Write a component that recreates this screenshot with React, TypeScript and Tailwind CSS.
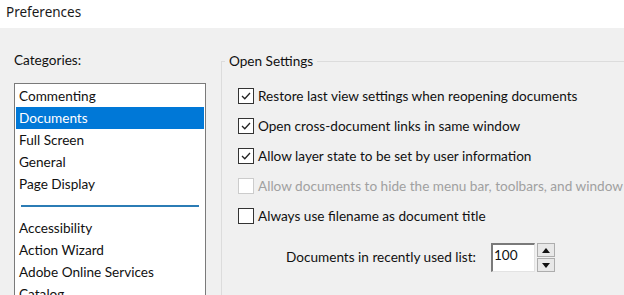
import React from "react";

const font = { fontFamily: "Lato, 'Noto Sans', sans-serif" };

function Check({ checked, disabled, label }: { checked?: boolean; disabled?: boolean; label: string }) {
  return (
    <div className="flex h-[30px] items-center">
      <div
        className={
          "flex h-[16px] w-[16px] shrink-0 items-center justify-center border bg-white " +
          (disabled ? "border-[#cccccc]" : "border-[#333333]")
        }
      >
        {checked && (
          <svg width="12" height="12" viewBox="0 0 12 12">
            <path d="M2 6 L4.8 8.8 L10 3" fill="none" stroke="#222" strokeWidth="1.3" />
          </svg>
        )}
      </div>
      <span className={"ml-[4px] whitespace-nowrap text-[13.6px] " + (disabled ? "text-[#a0a0a0]" : "text-[#111]")}>
        {label}
      </span>
    </div>
  );
}

export default function App() {
  const items1 = ["Commenting", "Documents", "Full Screen", "General", "Page Display"];
  const items2 = ["Accessibility", "Action Wizard", "Adobe Online Services", "Catalog"];
  return (
    <div className="flex h-[295px] w-[624px] flex-col overflow-hidden bg-[#f0f0f0]" style={font}>
      <div className="flex h-[28px] shrink-0 items-center bg-white pb-[4px] pl-[6px] text-[13.5px] text-[#1a1a1a]" style={{ fontFamily: "'Noto Sans', sans-serif" }}>
        Preferences
      </div>
      <div className="flex flex-1">
        <div className="flex w-[221px] shrink-0 flex-col pl-[14px]">
          <div className="mt-[22px] h-[20px] text-[13.6px] leading-[20px] text-[#111]">Categories:</div>
          <div className="mt-[13px] h-[300px] w-[192px] border border-[#7a7a7a] bg-white px-[1px] pt-[1px]">
            {items1.map((t) => (
              <div
                key={t}
                className={
                  "flex h-[22px] items-center pl-[3px] text-[13.6px] " +
                  (t === "Documents" ? "bg-[#0078d7] text-white" : "text-[#111]")
                }
              >
                {t}
              </div>
            ))}
            <div className="flex h-[22px] items-center px-[5px]">
              <div className="h-[1.5px] w-full bg-[#2b7cb5]" />
            </div>
            {items2.map((t) => (
              <div key={t} className="flex h-[22px] items-center pl-[3px] text-[13.6px] text-[#111]">
                {t}
              </div>
            ))}
          </div>
        </div>
        <fieldset className="mt-[24px] h-[400px] flex-1 border-l border-t border-[#dcdcdc]">
          <legend className="ml-[3px] px-[4px] text-[13.6px] leading-[18px] text-[#111]">Open Settings</legend>
          <div className="mt-[11px] flex flex-col pl-[16px]">
            <Check checked label="Restore last view settings when reopening documents" />
            <Check checked label="Open cross-document links in same window" />
            <Check checked label="Allow layer state to be set by user information" />
            <Check disabled label="Allow documents to hide the menu bar, toolbars, and window controls" />
            <Check label="Always use filename as document title" />
          </div>
          <div className="mt-[12px] flex items-center pl-[64px]">
            <span className="text-[13.6px] text-[#111]">Documents in recently used list:</span>
            <div className="ml-[15px] flex h-[29px] w-[44px] items-start border-l-2 border-t-2 border-r border-b border-l-[#7a7a7a] border-t-[#7a7a7a] border-r-[#e3e3e3] border-b-[#e3e3e3] bg-white pl-[1px] text-[13.6px] leading-[20px] text-[#111]">
              100
            </div>
            <div className="ml-[2px] flex flex-col gap-[1px]">
              <div className="flex h-[14px] w-[18px] items-center justify-center border border-[#adadad] bg-[#e8e8e8]">
                <svg width="8" height="5" viewBox="0 0 8 5"><path d="M0 5 L4 0 L8 5 Z" fill="#111" /></svg>
              </div>
              <div className="flex h-[14px] w-[18px] items-center justify-center border border-[#adadad] bg-[#e8e8e8]">
                <svg width="8" height="5" viewBox="0 0 8 5"><path d="M0 0 L4 5 L8 0 Z" fill="#111" /></svg>
              </div>
            </div>
          </div>
        </fieldset>
      </div>
    </div>
  );
}
